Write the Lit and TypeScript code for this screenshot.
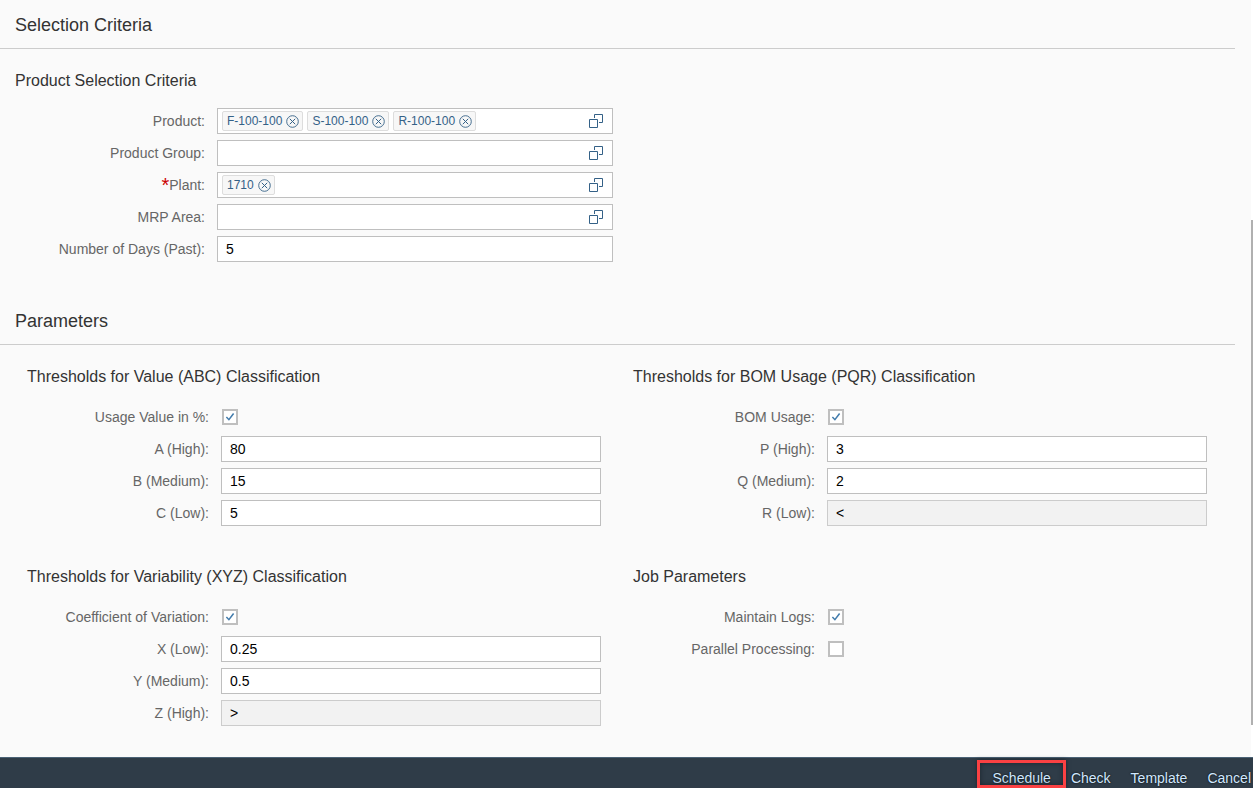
import { LitElement, html, css, svg, nothing } from "lit";
import { customElement } from "lit/decorators.js";

interface Field {
  id: string;
  label: string;
  kind: "text" | "multi" | "check";
  value?: string;
  tokens?: string[];
  checked?: boolean;
  readonly?: boolean;
  required?: boolean;
}

interface Group {
  title: string;
  fields: Field[];
}

const productGroup: Group = {
  title: "Product Selection Criteria",
  fields: [
    { id: "product", label: "Product:", kind: "multi", tokens: ["F-100-100", "S-100-100", "R-100-100"] },
    { id: "product-group", label: "Product Group:", kind: "multi", tokens: [] },
    { id: "plant", label: "Plant:", kind: "multi", tokens: ["1710"], required: true },
    { id: "mrp-area", label: "MRP Area:", kind: "multi", tokens: [] },
    { id: "days", label: "Number of Days (Past):", kind: "text", value: "5" },
  ],
};

const parameterGroups: Group[] = [
  {
    title: "Thresholds for Value (ABC) Classification",
    fields: [
      { id: "usage", label: "Usage Value in %:", kind: "check", checked: true },
      { id: "a", label: "A (High):", kind: "text", value: "80" },
      { id: "b", label: "B (Medium):", kind: "text", value: "15" },
      { id: "c", label: "C (Low):", kind: "text", value: "5" },
    ],
  },
  {
    title: "Thresholds for BOM Usage (PQR) Classification",
    fields: [
      { id: "bom", label: "BOM Usage:", kind: "check", checked: true },
      { id: "p", label: "P (High):", kind: "text", value: "3" },
      { id: "q", label: "Q (Medium):", kind: "text", value: "2" },
      { id: "r", label: "R (Low):", kind: "text", value: "<", readonly: true },
    ],
  },
  {
    title: "Thresholds for Variability (XYZ) Classification",
    fields: [
      { id: "cov", label: "Coefficient of Variation:", kind: "check", checked: true },
      { id: "x", label: "X (Low):", kind: "text", value: "0.25" },
      { id: "y", label: "Y (Medium):", kind: "text", value: "0.5" },
      { id: "z", label: "Z (High):", kind: "text", value: ">", readonly: true },
    ],
  },
  {
    title: "Job Parameters",
    fields: [
      { id: "logs", label: "Maintain Logs:", kind: "check", checked: true },
      { id: "parallel", label: "Parallel Processing:", kind: "check", checked: false },
    ],
  },
];

const removeIcon = html`<svg width="13" height="13" viewBox="0 0 13 13" fill="none" stroke="currentColor" aria-hidden="true">
  ${svg`<circle cx="6.5" cy="6.5" r="5.8" stroke-width="0.9"/><path d="M3.8 3.8l5.4 5.4M9.2 3.8l-5.4 5.4" stroke-width="1"/>`}
</svg>`;

const valueHelpIcon = html`<svg width="14" height="14" viewBox="0 0 14 14" fill="none" stroke="currentColor" aria-hidden="true">
  ${svg`<path d="M0.5 5.5h8v8h-8zM5.5 4V0.5h8v8H10"/>`}
</svg>`;

const tickIcon = html`<svg class="tick" width="16" height="16" viewBox="0 0 16 16" fill="none" aria-hidden="true">
  ${svg`<path d="M4.4 8.1l2.5 2.6 4.7-6.2" stroke="#427cac" stroke-width="1.5"/>`}
</svg>`;

@customElement("app-root")
export class AppRoot extends LitElement {
  static styles = css`
    * {
      box-sizing: border-box;
    }
    :host {
      display: flex;
      flex-direction: column;
      height: 100vh;
      overflow: hidden;
      background: #fafafa;
      color: #333;
      font-family: "Liberation Sans", Arial, sans-serif;
      font-size: 14px;
    }
    .body {
      flex: 1;
      min-height: 0;
      display: flex;
    }
    .page {
      flex: 1;
      min-width: 0;
      overflow: hidden;
    }
    .rail {
      width: 2px;
      background: #fff;
      display: flex;
      flex-direction: column;
    }
    .before {
      flex: 220;
    }
    .thumb {
      flex: 505;
      background: #b0b0b0;
    }
    .after {
      flex: 32;
    }
    h2,
    h3 {
      margin: 0;
      font-weight: normal;
    }
    h2 {
      margin-right: 16px;
      padding: 15px 0 13px 15px;
      border-bottom: 1px solid #ccc;
      font-size: 18px;
      line-height: 20px;
    }
    h3 {
      padding: 22px 0 17px;
      font-size: 16px;
      line-height: 20px;
    }
    .columns {
      display: grid;
      grid-template-columns: repeat(2, minmax(0, 1fr));
    }
    .selection {
      gap: 20px;
      padding: 0 20px 34px 15px;
    }
    .parameters {
      gap: 19px 32px;
      padding: 0 44px 0 27px;
    }
    .row {
      display: grid;
      grid-template-columns: 182px minmax(0, 1fr);
      gap: 12px;
      align-items: center;
      height: 26px;
      margin-bottom: 6px;
    }
    .selection .row {
      grid-template-columns: 190px minmax(0, 1fr);
    }
    .row:last-child {
      margin-bottom: 0;
    }
    label {
      color: #666;
      line-height: 16px;
      text-align: right;
      white-space: nowrap;
    }
    .star {
      color: #c00;
      font-size: 20px;
      line-height: 16px;
      vertical-align: -2px;
    }
    input {
      margin: 0;
      font: inherit;
      color: #000;
      outline: none;
    }
    .text {
      width: 100%;
      height: 26px;
      padding: 0 8px;
      border: 1px solid #bfbfbf;
      border-radius: 0;
      background: #fff;
    }
    .text:read-only {
      border-color: #ccc;
      background: #f2f2f2;
    }
    .check {
      display: grid;
      width: 16px;
      margin-left: 1px;
    }
    .box,
    .tick {
      grid-area: 1 / 1;
    }
    .box {
      appearance: none;
      width: 16px;
      height: 16px;
      border: 2px solid #bfbfbf;
      background: #fff;
    }
    .tick {
      pointer-events: none;
      visibility: hidden;
    }
    .box:checked + .tick {
      visibility: visible;
    }
    .multi {
      display: flex;
      align-items: center;
      gap: 4px;
      height: 26px;
      padding: 0 9px 0 4px;
      border: 1px solid #bfbfbf;
      background: #fff;
    }
    .entry {
      flex: 1;
      min-width: 0;
      height: 24px;
      padding: 0 4px;
      border: 0;
      background: none;
    }
    button {
      display: flex;
      padding: 0;
      border: 0;
      background: none;
      color: #346187;
      font: inherit;
    }
    .token {
      display: flex;
      align-items: center;
      gap: 4px;
      height: 20px;
      padding: 0 3px 0 4px;
      border: 1px solid #ddd;
      border-radius: 2px;
      background: #f7f7f7;
      color: #346187;
      font-size: 12px;
      line-height: 18px;
    }
    footer {
      flex: none;
      display: flex;
      justify-content: flex-end;
      gap: 20px;
      padding: 12px 2px 2px 0;
      border-top: 1px solid #4a6275;
      background: #2f3c48;
    }
    .action {
      position: relative;
      color: #d1e8ff;
      line-height: 16px;
      text-shadow: 0 0 2px #000;
    }
    .marked::after {
      content: "";
      position: absolute;
      inset: -10px -15px -2px -16px;
      border: 3px solid #fb4143;
      box-shadow: inset 0 0 5px #1b242d, 0 0 4px #1b242d;
    }
  `;

  private control(f: Field) {
    if (f.kind === "check") {
      return html`<span class="check"><input class="box" type="checkbox" id=${f.id} ?checked=${f.checked} />${tickIcon}</span>`;
    }
    if (f.kind === "text") {
      return html`<input class="text" type="text" id=${f.id} .value=${f.value ?? ""} ?readonly=${f.readonly} />`;
    }
    return html`<div class="multi">
      ${f.tokens!.map(
        (t) => html`<span class="token">${t}<button type="button" aria-label="Remove ${t}">${removeIcon}</button></span>`
      )}
      <input class="entry" type="text" id=${f.id} />
      <button type="button" aria-label="Open value help">${valueHelpIcon}</button>
    </div>`;
  }

  private group(g: Group) {
    return html`<section>
      <h3>${g.title}</h3>
      ${g.fields.map(
        (f) => html`<div class="row">
          <label for=${f.id}>${f.required ? html`<span class="star">*</span>` : nothing}${f.label}</label>
          ${this.control(f)}
        </div>`
      )}
    </section>`;
  }

  render() {
    return html`
      <div class="body">
        <main class="page">
          <h2>Selection Criteria</h2>
          <div class="columns selection">${this.group(productGroup)}</div>
          <h2>Parameters</h2>
          <div class="columns parameters">${parameterGroups.map((g) => this.group(g))}</div>
        </main>
        <div class="rail">
          <div class="before"></div>
          <div class="thumb"></div>
          <div class="after"></div>
        </div>
      </div>
      <footer>
        <button type="button" class="action marked">Schedule</button>
        <button type="button" class="action">Check</button>
        <button type="button" class="action">Template</button>
        <button type="button" class="action">Cancel</button>
      </footer>
    `;
  }
}
